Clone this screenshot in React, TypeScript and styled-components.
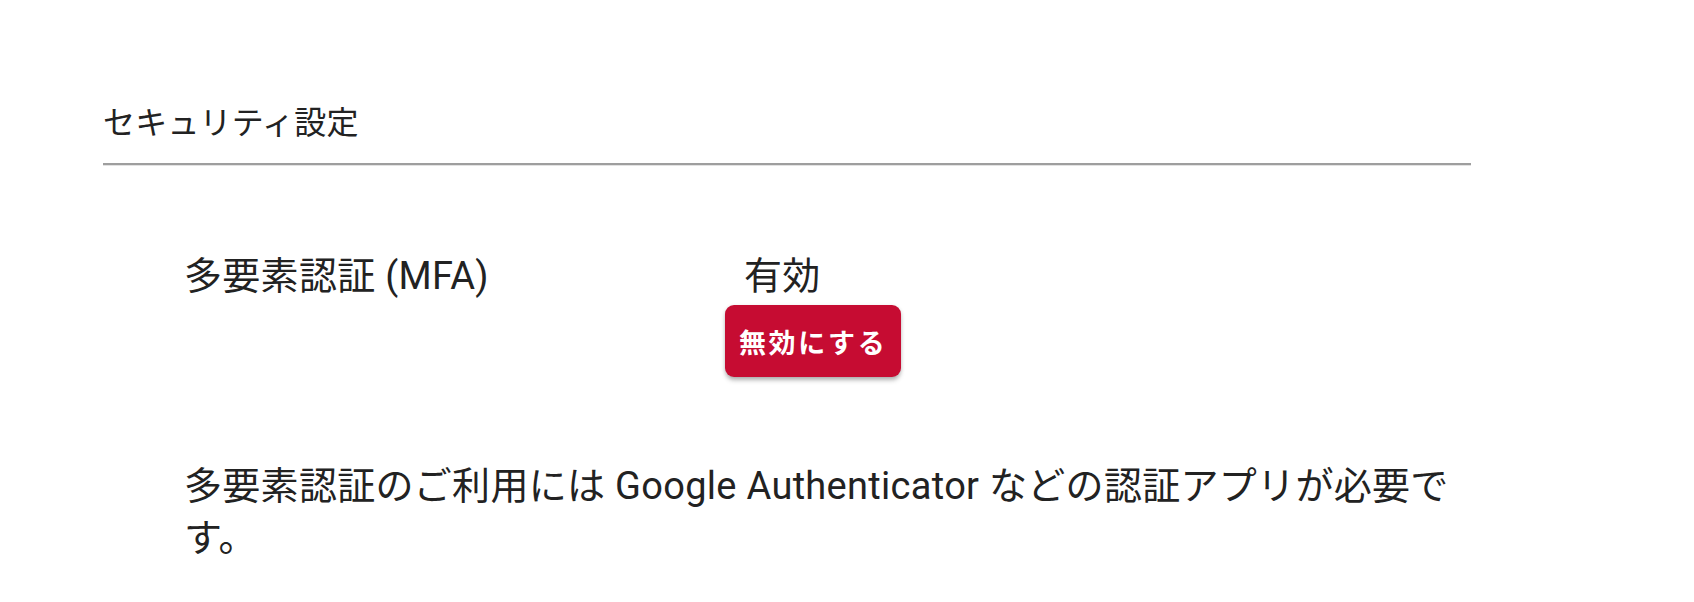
import styled, { createGlobalStyle } from 'styled-components';

const GlobalStyle = createGlobalStyle`
    body {
        margin: 0;
        background: #fff;
        font-family: Roboto, "Noto Sans CJK JP", sans-serif;
        color: #222;
    }
`;

const Page = styled.main`
    padding: 99px 0 0 103px;
    width: 1368px;
`;

const SectionTitle = styled.h2`
    margin: 0;
    padding-bottom: 16px;
    font-size: 32px;
    line-height: 48px;
    font-weight: 400;
    letter-spacing: 0.2px;
    border-bottom: 2px solid #9e9e9e;
    box-shadow: 0 1px 0 #e2e2e2;
`;

const Content = styled.section`
    padding: 83px 0 0 81px;
`;

const SettingRow = styled.div`
    display: flex;
    align-items: flex-start;
`;

const Label = styled.div`
    width: 541px;
    font-size: 38px;
    line-height: 57px;
    letter-spacing: 0.3px;
`;

const ValueCell = styled.div`
    display: flex;
    flex-direction: column;
    align-items: flex-start;
`;

const Status = styled.span`
    padding-left: 19px;
    font-size: 38px;
    line-height: 57px;
    letter-spacing: 0.3px;
`;

const DangerButton = styled.button`
    height: 72px;
    padding: 0 14px;
    border: none;
    border-radius: 9px;
    background-color: #c60c32;
    color: #fff;
    font-family: Roboto, "Noto Sans CJK JP", sans-serif;
    font-size: 27px;
    font-weight: 700;
    letter-spacing: 2.6px;
    box-shadow: 0 4px 5px -1px rgb(0 0 0 / 0.28), 0 1px 4px rgb(0 0 0 / 0.12);
    cursor: pointer;
`;

const Note = styled.p`
    margin: 83px 0 0;
    font-size: 38px;
    line-height: 52px;
    letter-spacing: 0.3px;
`;

const App = () => {
    return (
        <>
            <GlobalStyle />
            <Page>
                <SectionTitle>セキュリティ設定</SectionTitle>

                <Content>
                    <SettingRow>
                        <Label>多要素認証 (MFA)</Label>
                        <ValueCell>
                            <Status>有効</Status>
                            <DangerButton type="button">無効にする</DangerButton>
                        </ValueCell>
                    </SettingRow>

                    <Note>
                        多要素認証のご利用には Google Authenticator などの認証アプリが必要です。
                    </Note>
                </Content>
            </Page>
        </>
    );
};

export default App;
